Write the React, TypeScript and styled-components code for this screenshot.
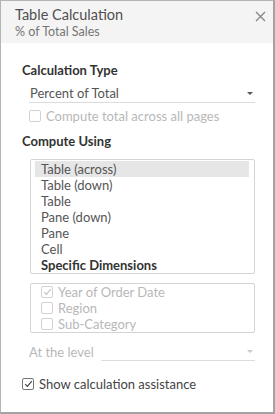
import React, { useState } from 'react';
import styled, { createGlobalStyle } from 'styled-components';

const GlobalStyle = createGlobalStyle`
    html, body { margin: 0; padding: 0; background: #fff; }
    body { font-family: Lato, "Open Sans", sans-serif; }
`;

//Panel
const Panel = styled.div`
    box-sizing: border-box;
    width: 275px;
    height: 414px;
    border: 1px solid #b4b4b4;
    border-right: 2px solid #a2a2a2;
    border-bottom: 2px solid #a2a2a2;
    background: #fff;
    display: flex;
    flex-direction: column;
`;

const Header = styled.div`
    display: flex;
    justify-content: space-between;
    align-items: flex-start;
    background: #f4f4f4;
    padding: 5px 7px 0 14px;
    height: 42px;
    box-sizing: border-box;
`;

const Title = styled.div`
    font-size: 14.5px;
    color: #505050;
    line-height: 18px;
`;

const Subtitle = styled.div`
    font-size: 12.5px;
    color: #757575;
    line-height: 15px;
`;

const Close = styled.button`
    border: none;
    background: none;
    padding: 0;
    margin-top: 5px;
    width: 11px;
    height: 11px;
    display: flex;
`;

const Body = styled.div`
    padding: 19px 18px 0 21px;
    display: flex;
    flex-direction: column;
`;

const Heading = styled.div<{ $top?: number }>`
    font-size: 13px;
    font-weight: 700;
    color: #333;
    line-height: 16px;
    margin-top: ${p => p.$top ?? 0}px;
`;

const SelectRow = styled.div<{ $top: number }>`
    display: flex;
    align-items: flex-end;
    margin: ${p => p.$top}px 0 0 7px;
    gap: 7px;
`;

const Select = styled.div<{ $disabled?: boolean }>`
    display: flex;
    align-items: center;
    justify-content: space-between;
    flex: 1;
    line-height: 16px;
    height: 16px;
    border-bottom: 1px solid #dcdcdc;
    font-size: 13px;
    color: ${p => (p.$disabled ? '#c4c4c4' : '#555')};
    padding: 0 2px 1px 1px;
`;

const Arrow = styled.span<{ $disabled?: boolean }>`
    width: 0;
    height: 0;
    border-left: 3px solid transparent;
    border-right: 3px solid transparent;
    border-top: 3px solid ${p => (p.$disabled ? '#c8c8c8' : '#555')};
`;

const LevelLabel = styled.span`
    font-size: 13px;
    line-height: 16px;
    color: #b8b8b8;
    padding-bottom: 1px;
`;

const CheckRow = styled.label<{ $disabled?: boolean; $top?: number; $left?: number }>`
    display: flex;
    align-items: center;
    gap: 5px;
    font-size: 13px;
    line-height: 16px;
    height: 16px;
    color: ${p => (p.$disabled ? '#b8b8b8' : '#444')};
    margin: ${p => p.$top ?? 0}px 0 0 ${p => p.$left ?? 0}px;
`;

const Box = styled.span<{ $disabled?: boolean }>`
    box-sizing: border-box;
    flex: none;
    width: 12px;
    height: 12px;
    border: 1px solid ${p => (p.$disabled ? '#d2d2d2' : '#777')};
    border-radius: 2px;
    background: #fff;
    display: flex;
    align-items: center;
    justify-content: center;
`;

const ListBox = styled.div<{ $top: number; $pad: string }>`
    margin: ${p => p.$top}px 0 0 8px;
    border: 1px solid #d4d4d4;
    border-radius: 2px;
    padding: ${p => p.$pad};
    display: flex;
    flex-direction: column;
`;

const ListItem = styled.div<{ $selected?: boolean; $bold?: boolean }>`
    height: 16px;
    line-height: 16px;
    font-size: 13px;
    padding-left: 6px;
    color: ${p => (p.$bold ? '#333' : '#555')};
    font-weight: ${p => (p.$bold ? 700 : 400)};
    background: ${p => (p.$selected ? '#e6e6e6' : 'transparent')};
`;

const Tick = ({ color }: { color: string }) => (
    <svg width="9" height="8" viewBox="0 0 9 8">
        <path d="M1.2 4.2 L3.4 6.4 L7.8 1.2" fill="none" stroke={color} strokeWidth="1.2" />
    </svg>
);

const options = ['Table (across)', 'Table (down)', 'Table', 'Pane (down)', 'Pane', 'Cell'];
const dims = [
    { name: 'Year of Order Date', checked: true },
    { name: 'Region', checked: false },
    { name: 'Sub-Category', checked: false },
];

export default function App() {
    const [selected] = useState(0);

    return (
        <>
            <GlobalStyle />
            <Panel>
                <Header>
                    <div>
                        <Title>Table Calculation</Title>
                        <Subtitle>% of Total Sales</Subtitle>
                    </div>
                    <Close aria-label="Close">
                        <svg width="11" height="11" viewBox="0 0 11 11">
                            <path d="M1 1 L10 10 M10 1 L1 10" stroke="#858585" strokeWidth="1.3" />
                        </svg>
                    </Close>
                </Header>

                <Body>
                    <Heading>Calculation Type</Heading>
                    <SelectRow $top={7}>
                        <Select>
                            <span>Percent of Total</span>
                            <Arrow />
                        </Select>
                    </SelectRow>
                    <CheckRow $disabled $top={5} $left={7}>
                        <Box $disabled />
                        Compute total across all pages
                    </CheckRow>

                    <Heading $top={9}>Compute Using</Heading>
                    <ListBox $top={10} $pad="1px 5px 0 4px">
                        {options.map((o, i) => (
                            <ListItem key={o} $selected={i === selected}>{o}</ListItem>
                        ))}
                        <ListItem $bold>Specific Dimensions</ListItem>
                    </ListBox>

                    <ListBox $top={9} $pad="0 10px">
                        {dims.map(d => (
                            <CheckRow key={d.name} $disabled>
                                <Box $disabled>{d.checked && <Tick color="#c4c4c4" />}</Box>
                                {d.name}
                            </CheckRow>
                        ))}
                    </ListBox>

                    <SelectRow $top={10}>
                        <LevelLabel>At the level</LevelLabel>
                        <Select $disabled>
                            <span />
                            <Arrow $disabled />
                        </Select>
                    </SelectRow>

                    <CheckRow $top={15}>
                        <Box><Tick color="#444" /></Box>
                        Show calculation assistance
                    </CheckRow>
                </Body>
            </Panel>
        </>
    );
}
